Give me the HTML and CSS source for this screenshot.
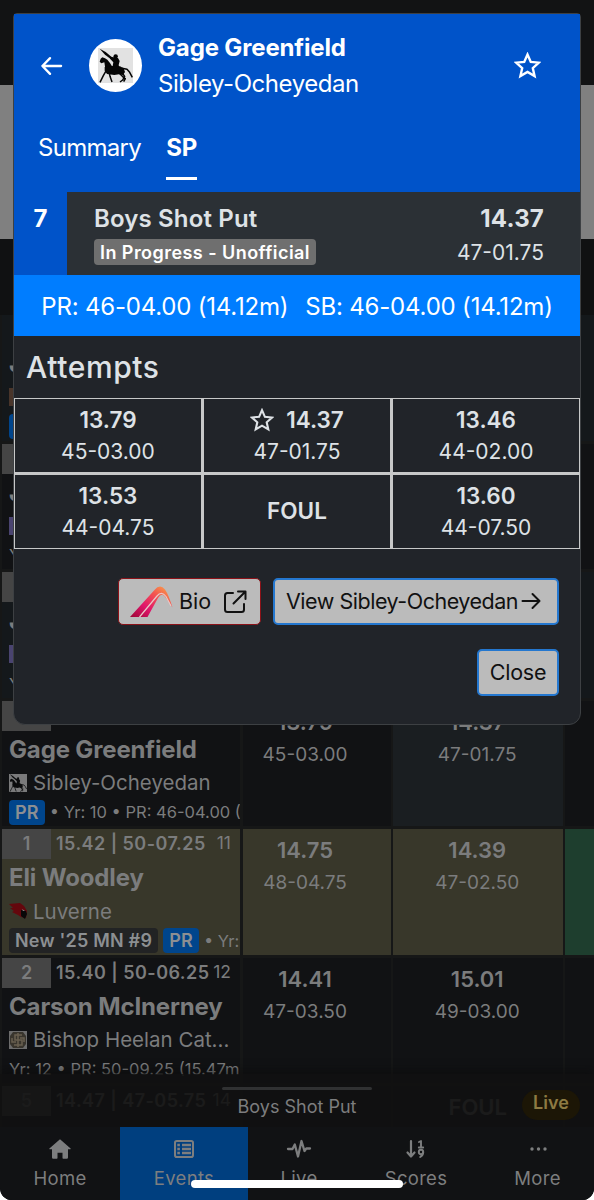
FILE: index.html
```html
<!DOCTYPE html>
<html lang="en">

<head>
    <meta charset="UTF-8">
    <meta name="viewport" content="width=device-width, initial-scale=1.0">
    <title>Boys Shot Put</title>
    <link rel="stylesheet" href="styles.css">
</head>

<body>
    <svg width="0" height="0" class="defs">
        <symbol id="star" viewBox="0 0 24 24">
            <path d="M12 2.200l2.900 6.600 7.200.7-5.400 4.800 1.600 7.100L12 17.700l-6.300 3.700 1.600-7.100L1.900 9.500l7.200-.7z" fill="none" stroke="currentColor" stroke-width="2.100" />
        </symbol>
        <symbol id="horse" viewBox="294 143 105 105">
            <rect x="294" y="143" width="105" height="105" fill="#e2e2e2" />
            <!-- rider -->
            <path d="M299 145l18 10 18 15-3 6-17-13z" fill="#050505" />
            <circle cx="347" cy="168" r="6.500" fill="#050505" />
            <path d="M330 169l12 2 12 2 5 9-3 12 4 14-24 0 4-22-10-11z" fill="#050505" />
            <!-- horse -->
            <path d="M299 184l3-9 5-4 8 3 7 4 8 10 6 10-8 14-12-6-2-14-1-6-9 3z" fill="#050505" />
            <path d="M314 200l20-3 26 1 11 6 4 11-6 9-12-2-14 2-22-3-7-10z" fill="#050505" />
            <path d="M319 210l-9 16-10 20M327 214l3 14 6 17M366 204l15 3 8 9 8 15M367 218l7 10-6 11-8 6M358 219l12 12 6 4-5 9" fill="none" stroke="#050505" stroke-width="4.500" stroke-linejoin="round" />
        </symbol>
    </svg>

    <div class="screen">
        <div class="top-bar"></div>
        <div class="banner"></div>
        <div class="spacer"></div>

        <div class="results">
            <div class="row alt">
                <div class="cell athlete">
                    <div class="rank-line"></div>
                    <div class="name">J</div>
                    <div class="school"><i class="logo brown"></i></div>
                    <div class="meta"><span class="pr">PR</span></div>
                </div>
                <div class="cell"></div><div class="cell"></div><div class="cell"></div>
            </div>
            <div class="row">
                <div class="cell athlete">
                    <div class="rank-line"><span class="rank"></span></div>
                    <div class="name">J</div>
                    <div class="school"><i class="logo purple"></i></div>
                    <div class="meta">Yr:</div>
                </div>
                <div class="cell"></div><div class="cell"></div><div class="cell"></div>
            </div>
            <div class="row alt">
                <div class="cell athlete">
                    <div class="rank-line"><span class="rank"></span></div>
                    <div class="name">J</div>
                    <div class="school"><i class="logo purple"></i></div>
                    <div class="meta">Yr:</div>
                </div>
                <div class="cell"></div><div class="cell"></div><div class="cell"></div>
            </div>
            <div class="row">
                <div class="cell athlete">
                    <div class="rank-line"><span class="rank">7</span></div>
                    <div class="name">Gage Greenfield</div>
                    <div class="school"><svg class="logo dim"><use href="#horse" /></svg><span>Sibley-Ocheyedan</span></div>
                    <div class="meta"><span class="pr">PR</span><span>• Yr: 10 • PR: 46-04.00 (14.12m)</span></div>
                </div>
                <div class="cell mark"><b>13.79</b><span>45-03.00</span></div>
                <div class="cell mark best"><b>14.37</b><span>47-01.75</span></div>
                <div class="cell"></div>
            </div>
            <div class="row leader">
                <div class="cell athlete">
                    <div class="rank-line"><span class="rank">1</span><b>15.42 | 50-07.25</b><small>11</small></div>
                    <div class="name">Eli Woodley</div>
                    <div class="school">
                        <svg class="logo" viewBox="0 0 18 18">
                            <path d="M0 2l11-1 4 3 3 5-1 7-5-1-3-2-6-3 2-1-4-3 3 0z" fill="#64070d" />
                            <path d="M12 8l5 1 1 3-2 5-4-3z" fill="#080808" />
                            <path d="M13 7l3 2-2 0z" fill="#888" />
                        </svg>
                        <span>Luverne</span>
                    </div>
                    <div class="meta"><span class="record">New '25 MN #9</span><span class="pr">PR</span><span>• Yr: 12</span></div>
                </div>
                <div class="cell mark"><b>14.75</b><span>48-04.75</span></div>
                <div class="cell mark"><b>14.39</b><span>47-02.50</span></div>
                <div class="cell green"></div>
            </div>
            <div class="row">
                <div class="cell athlete">
                    <div class="rank-line"><span class="rank">2</span><b>15.40 | 50-06.25</b><small>12</small></div>
                    <div class="name">Carson McInerney</div>
                    <div class="school">
                        <svg class="logo" viewBox="0 0 18 18">
                            <rect width="18" height="18" fill="#6c6c6c" />
                            <path d="M4 1h10l3 4v8l-3 4H4l-3-4V5z" fill="#39352d" />
                            <path d="M13 4H6v5h7v5H5M9 2v14M3 7v4h4M11 7h4v4" fill="none" stroke="#6a6050" stroke-width="1.500" />
                        </svg>
                        <span>Bishop Heelan Cat...</span>
                    </div>
                    <div class="meta">Yr: 12 • PR: 50-09.25 (15.47m)</div>
                </div>
                <div class="cell mark"><b>14.41</b><span>47-03.50</span></div>
                <div class="cell mark"><b>15.01</b><span>49-03.00</span></div>
                <div class="cell"></div>
            </div>
            <div class="row">
                <div class="cell athlete">
                    <div class="rank-line"><span class="rank">5</span><b>14.47 | 47-05.75</b><small>14</small></div>
                </div>
                <div class="cell"></div>
                <div class="cell mark no-mark"><b>FOUL</b></div>
                <div class="cell"></div>
            </div>
        </div>

        <div class="dock">
            <div class="drawer">
                <div class="handle"></div>
                <div class="drawer-title">Boys Shot Put</div>
                <div class="live">Live</div>
            </div>
            <div class="nav">
                <div class="item">
                    <svg width="24" height="24" viewBox="0 0 24 24" fill="currentColor"><path d="M12 2.200L22.600 11.400q.5.6-.3.8H20v8.300q0 1.300-1.300 1.300h-3.500q-.7 0-.7-.7v-5.400H9.500v5.400q0 .7-.7.7H5.300Q4 21.800 4 20.500V12.200H1.700q-.8-.2-.3-.8z" /></svg>
                    <span>Home</span>
                </div>
                <div class="item active">
                    <svg width="24" height="24" viewBox="0 0 24 24" fill="none" stroke="currentColor" stroke-width="2"><rect x="3" y="4" width="18" height="16" rx="1.800" /><path d="M5.300 8h2.600M10 8h9M5.300 12h2.600M10 12h9M5.300 16h2.600M10 16h9" stroke-width="2.300" /></svg>
                    <span>Events</span>
                </div>
                <div class="item">
                    <svg width="26" height="24" viewBox="0 0 26 24" fill="none" stroke="currentColor" stroke-width="2.300" stroke-linejoin="round" stroke-linecap="round"><path d="M2 12h4.500l2.300-4.500 3.200 12L15.500 4l3 10 1.800-2.500H24" /></svg>
                    <span>Live</span>
                </div>
                <div class="item">
                    <svg width="24" height="24" viewBox="0 0 24 24" fill="none" stroke="currentColor" stroke-width="2.200" stroke-linecap="round" stroke-linejoin="round"><path d="M7 4v15M3.500 15.500L7 19.500l3.500-4" /><path d="M15 5l2-1v6.500M14.800 10.500h4.400" stroke-width="1.900" /><circle cx="17" cy="15" r="2.200" stroke-width="1.900" /><path d="M19.200 15q0 3.300-3 5" stroke-width="1.900" /></svg>
                    <span>Scores</span>
                </div>
                <div class="item">
                    <svg width="24" height="24" viewBox="0 0 24 24" fill="currentColor"><circle cx="6" cy="12" r="1.700" /><circle cx="12.500" cy="12" r="1.700" /><circle cx="19" cy="12" r="1.700" /></svg>
                    <span>More</span>
                </div>
            </div>
            <div class="home-indicator"></div>
        </div>

        <div class="modal">
            <div class="modal-header">
                <div class="profile">
                    <svg class="back" viewBox="0 0 24 22" fill="none" stroke="#fff" stroke-width="2.400" stroke-linecap="round" stroke-linejoin="round"><path d="M22 11H2.500M10.500 2.800L2.500 11l8 8.200" /></svg>
                    <div class="avatar"><svg><use href="#horse" /></svg></div>
                    <div class="who">
                        <h1>Gage Greenfield</h1>
                        <p>Sibley-Ocheyedan</p>
                    </div>
                    <svg class="fav"><use href="#star" /></svg>
                </div>
                <div class="tabs">
                    <div class="tab summary">Summary</div>
                    <div class="tab selected">SP</div>
                </div>
            </div>

            <div class="event">
                <div class="place">7</div>
                <div class="event-info">
                    <h2>Boys Shot Put</h2>
                    <span class="status">In Progress - Unofficial</span>
                </div>
                <div class="event-mark">
                    <b>14.37</b>
                    <span>47-01.75</span>
                </div>
            </div>

            <div class="bests">
                <span>PR: 46-04.00 (14.12m)</span>
                <span>SB: 46-04.00 (14.12m)</span>
            </div>

            <h3>Attempts</h3>
            <div class="attempts">
                <div class="attempt"><b>13.79</b><span>45-03.00</span></div>
                <div class="attempt"><b><svg><use href="#star" /></svg>14.37</b><span>47-01.75</span></div>
                <div class="attempt"><b>13.46</b><span>44-02.00</span></div>
                <div class="attempt"><b>13.53</b><span>44-04.75</span></div>
                <div class="attempt"><b class="foul">FOUL</b></div>
                <div class="attempt"><b>13.60</b><span>44-07.50</span></div>
            </div>

            <div class="actions">
                <button class="btn bio">
                    <svg width="43" height="32" viewBox="0 0 43 32">
                        <defs>
                            <linearGradient id="flame" x1="0" y1="1" x2="1" y2="0">
                                <stop offset="0" stop-color="#9c0635" />
                                <stop offset=".35" stop-color="#e0156b" />
                                <stop offset=".68" stop-color="#f4574f" />
                                <stop offset="1" stop-color="#f9b04a" />
                            </linearGradient>
                        </defs>
                        <path d="M0 31L24.500 4Q30-2.500 35 3.500q3.500 5 7.500 18L36 12q-4-6.500-8 0L17.500 31z" fill="url(#flame)" />
                        <path d="M9.500 31L27 10q4.500-5.500 9 .5L41 20" fill="none" stroke="#e8c8c8" stroke-width="1.200" />
                    </svg>
                    <span>Bio</span>
                    <svg class="external" width="24" height="24" viewBox="0 0 24 24" fill="none" stroke="#111" stroke-width="2" stroke-linecap="round" stroke-linejoin="round"><path d="M10 3H4.500Q2 3 2 5.500v14Q2 22 4.500 22h14q2.500 0 2.500-2.500V14M15 1.500h7.500V9M22 2L10.500 13.500" /></svg>
                </button>
                <button class="btn view"><span>View Sibley-Ocheyedan</span><svg width="20" height="18" viewBox="0 0 20 18" fill="none" stroke="#111" stroke-width="2" stroke-linecap="round" stroke-linejoin="round"><path d="M1.500 9h17M11.500 2l7 7-7 7" /></svg></button>
                <button class="btn close">Close</button>
            </div>
        </div>
    </div>
</body>
</html>
```
FILE: styles.css
```css
* {
    box-sizing: border-box;
}

body {
    margin: 0;
    background-color: #fff;
    font-family: Inter, "Liberation Sans", sans-serif;
}

h1, h2, h3, p {
    margin: 0;
}

.defs {
    display: block;
}

.screen {
    position: relative;
    width: 594px;
    height: 1200px;
    overflow: hidden;
    background-color: #161717;
    border-radius: 0 0 12px 12px;
}

.top-bar {
    height: 85px;
    background-color: #121314;
}

.banner {
    height: 154px;
    background-color: #808080;
}

.spacer {
    height: 76px;
    background-color: #101112;
}

/* results table behind the modal */
.results {
    display: grid;
    grid-auto-rows: 125.5px;
    row-gap: 3px;
    color: #7b7c7d;
}

.row {
    display: grid;
    grid-template-columns: 238px 148px 169.5px 29px;
    column-gap: 2.5px;
    padding-left: 2px;
}

.cell {
    background-color: #111214;
    overflow: hidden;
}

.alt .cell {
    background-color: #14181b;
}

.leader .cell {
    background-color: #38372a;
}

.row .best {
    background-color: #1a1e21;
}

.row .green {
    background-color: #1e3e2e;
}

.athlete {
    white-space: nowrap;
}

.rank-line {
    display: flex;
    height: 30px;
}

.rank {
    width: 49px;
    height: 30px;
    background-color: #454545;
    text-align: center;
    font-size: 18px;
    font-weight: 600;
    line-height: 30px;
}

.rank-line b {
    padding-left: 5px;
    font-size: 18px;
    font-weight: 600;
    line-height: 30px;
    letter-spacing: 0.45px;
}

.rank-line small {
    margin: 0 9px 0 auto;
    font-size: 17.5px;
    line-height: 27px;
}

.name {
    height: 37px;
    padding-left: 7px;
    font-size: 24px;
    font-weight: 700;
    line-height: 38px;
    letter-spacing: -0.15px;
}

.school {
    display: flex;
    align-items: center;
    height: 30px;
    padding-left: 7px;
    gap: 6px;
    font-size: 20.5px;
}

.logo {
    width: 18px;
    height: 18px;
    flex: none;
}

.dim {
    opacity: 0.5;
}

.brown {
    background-color: #49352a;
}

.purple {
    background-color: #4a4470;
}

.meta {
    display: flex;
    align-items: center;
    height: 27px;
    margin-top: 1px;
    padding-left: 7px;
    gap: 5px;
    font-size: 16.5px;
}

.pr,
.record {
    height: 25px;
    padding: 0 6px;
    border-radius: 4px;
    background-color: #00458c;
    color: #8c8f92;
    font-size: 18px;
    font-weight: 600;
    line-height: 25px;
    letter-spacing: 0.2px;
}

.record {
    background-color: #222324;
}

.mark {
    display: flex;
    flex-direction: column;
    align-items: center;
    padding-top: 6px;
    padding-right: 23px;
}

.mark + .mark {
    padding-right: 1px;
}

.row .no-mark {
    padding-right: 0;
    padding-left: 0;
}

.mark b {
    font-size: 22px;
    font-weight: 600;
    line-height: 30px;
}

.mark span {
    font-size: 19px;
    line-height: 35px;
}

/* bottom bars */
.dock {
    position: absolute;
    left: 0;
    bottom: 0;
    width: 594px;
}

.drawer {
    display: grid;
    grid-template-columns: 1fr 150px 1fr;
    grid-template-rows: 3px 36px;
    height: 53px;
    padding-top: 13px;
    background-color: rgba(17, 17, 17, 0.9);
    box-shadow: 0 -4px 8px rgba(10, 10, 10, 0.5);
}

.handle {
    grid-column: 2;
    height: 3px;
    border-radius: 2px;
    background-color: #303132;
}

.drawer-title {
    grid-column: 2;
    font-size: 18px;
    line-height: 34px;
    text-align: center;
    white-space: nowrap;
    color: #7c7d7e;
}

.live {
    justify-self: end;
    width: 58px;
    height: 30px;
    margin-right: 14px;
    border-radius: 15px;
    background-color: #1c1606;
    color: #8d7a42;
    font-size: 18px;
    font-weight: 600;
    line-height: 25px;
    text-align: center;
}

.nav {
    display: grid;
    grid-template-columns: 120px 128px 102px 132px 111px;
    height: 73px;
    background-color: #111214;
    color: #7d7e7f;
}

.item {
    display: flex;
    flex-direction: column;
    align-items: center;
    padding-top: 10px;
    font-size: 18.5px;
    letter-spacing: 0.3px;
}

.item span {
    line-height: 34px;
}

.active {
    background-color: #003f7f;
}

.home-indicator {
    position: absolute;
    left: 191px;
    bottom: 12px;
    width: 212px;
    height: 8px;
    border-radius: 4px;
    background-color: #fff;
}

/* athlete modal */
.modal {
    position: absolute;
    left: 13px;
    top: 13px;
    width: 568px;
    height: 712px;
    border: 1px solid #3d4043;
    border-radius: 4px 4px 12px 12px;
    background-color: #212429;
    color: #dee2e6;
}

.modal-header {
    height: 178px;
    background-color: #0053c9;
    color: #fff;
}

.profile {
    display: flex;
    align-items: center;
    height: 103px;
    padding: 0 39px 0 26px;
}

.back {
    width: 23px;
    height: 22px;
}

.avatar {
    display: flex;
    align-items: center;
    justify-content: center;
    width: 53px;
    height: 53px;
    margin: 0 16px 0 26px;
    border-radius: 50%;
    background-color: #fff;
}

.avatar svg {
    width: 35px;
    height: 35px;
}

.who {
    flex: 1;
}

.who h1 {
    font-size: 24px;
    font-weight: 700;
    line-height: 36px;
    letter-spacing: -0.15px;
}

.who p {
    font-size: 24px;
    line-height: 36px;
    letter-spacing: -0.45px;
}

.fav {
    width: 27px;
    height: 27px;
}

.tabs {
    display: flex;
    gap: 25px;
    padding: 11px 0 0 24px;
    font-size: 24px;
}

.tab {
    height: 52px;
    line-height: 40px;
}

.summary {
    letter-spacing: -0.7px;
}

.selected {
    font-weight: 700;
    border-bottom: 3px solid #fff;
}

.event {
    display: flex;
    height: 83px;
    background-color: #2b3035;
}

.place {
    width: 53px;
    background-color: #0053c9;
    color: #fff;
    font-size: 24px;
    font-weight: 700;
    line-height: 54px;
    text-align: center;
}

.event-info {
    flex: 1;
    padding: 10px 0 0 27px;
}

.event-info h2 {
    font-size: 24px;
    font-weight: 600;
    line-height: 34px;
    letter-spacing: 0.15px;
}

.status {
    display: block;
    width: 222px;
    height: 26px;
    margin-top: 3px;
    border-radius: 4px;
    background-color: #6f6f6f;
    color: #fff;
    font-size: 18px;
    font-weight: 600;
    line-height: 27px;
    letter-spacing: 0.45px;
    text-align: center;
    white-space: nowrap;
}

.event-mark {
    display: flex;
    flex-direction: column;
    align-items: flex-end;
    padding: 10px 36px 0 0;
}

.event-mark b {
    font-size: 24px;
    font-weight: 700;
    line-height: 34px;
    letter-spacing: 0.2px;
}

.event-mark span {
    font-size: 21px;
    line-height: 33px;
}

.bests {
    display: flex;
    justify-content: center;
    gap: 17px;
    height: 61px;
    background-color: #007dff;
    color: #fff;
    font-size: 24px;
    line-height: 63px;
    letter-spacing: -0.2px;
    white-space: nowrap;
}

.modal h3 {
    height: 62px;
    padding-left: 12px;
    font-size: 30px;
    font-weight: 500;
    line-height: 62px;
    letter-spacing: 0.6px;
}

.attempts {
    display: grid;
    grid-template-columns: 186px 186px 1fr;
    grid-template-rows: 73px 73px;
    gap: 3px;
    padding: 1px;
    background-color: #c7c8c8;
}

.attempt {
    display: flex;
    flex-direction: column;
    align-items: center;
    padding-top: 5px;
    background-color: #212429;
}

.attempt b {
    display: flex;
    align-items: center;
    height: 31px;
    font-size: 22.5px;
    font-weight: 600;
}

.attempt b svg {
    width: 24px;
    height: 24px;
    margin-right: 12px;
}

.attempt span {
    font-size: 21px;
    line-height: 33px;
}

.attempt .foul {
    margin-top: 15px;
}

.actions {
    display: flex;
    flex-wrap: wrap;
    justify-content: flex-end;
    gap: 24px 12px;
    padding: 29px 21px 0;
}

.btn {
    display: flex;
    align-items: center;
    height: 47px;
    padding: 0 11px 2px;
    border: 2px solid #2477cf;
    border-radius: 5px;
    background-color: #bbb;
    color: #111;
    font-family: inherit;
    font-size: 21.5px;
    white-space: nowrap;
}

.btn svg {
    flex: none;
}

.bio {
    width: 143px;
    padding: 0 11px;
    border: 1px solid #8b1218;
}

.bio span {
    margin: 0 12px 2px 6px;
}

.view {
    width: 286px;
    gap: 3px;
    letter-spacing: -0.48px;
}

.close {
    width: 82px;
    justify-content: center;
    letter-spacing: -0.2px;
}
```
